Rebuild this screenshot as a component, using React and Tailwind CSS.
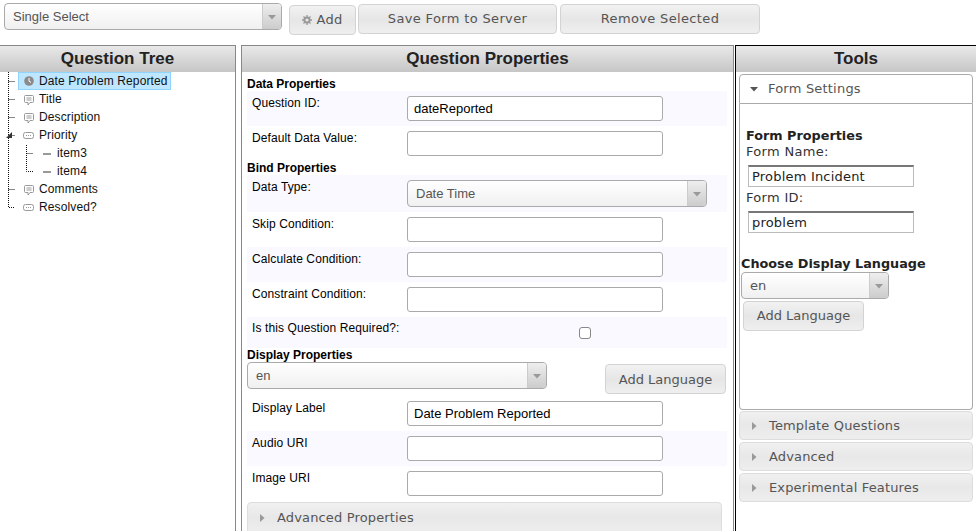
const sans = 'font-["Liberation_Sans",Arial,sans-serif]';
const verdana = 'font-["DejaVu_Sans",Verdana,sans-serif]';

function Caret({ open, light, className = '' }) {
  return (
    <svg width="8" height="8" viewBox="0 0 8 8" className={className}>
      {open ? <path d="M0 2h8L4 6.500z" fill={light ? '#999' : '#555'} /> : <path d="M2 0l4.500 4L2 8z" fill="#999" />}
    </svg>
  );
}

function Gear() {
  return (
    <svg width="10" height="10" viewBox="0 0 10 10">
      <circle cx="5" cy="5" r="2.600" fill="none" stroke="#999" strokeWidth="2" />
      <path d="M5 0v2M5 8v2M0 5h2M8 5h2M1.500 1.500l1.400 1.400M7.100 7.100l1.400 1.400M8.500 1.500L7.100 2.900M2.900 7.100L1.500 8.500" stroke="#999" strokeWidth="1.300" />
    </svg>
  );
}

function TreeIcon({ type }) {
  if (type === 'clock') {
    return (
      <svg width="10" height="10" viewBox="0 0 10 10">
        <circle cx="5" cy="5" r="4.800" fill="#8a8a8a" />
        <path d="M5 2v3.200l2 1.200" stroke="#fff" strokeWidth="1" fill="none" />
      </svg>
    );
  }
  if (type === 'text') {
    return (
      <svg width="10" height="11" viewBox="0 0 10 11" className="mt-[2px]">
        <path d="M1.500.5h7a1 1 0 0 1 1 1v5a1 1 0 0 1-1 1H6L4 10V7.500H1.500a1 1 0 0 1-1-1v-5a1 1 0 0 1 1-1z" fill="none" stroke="#999" />
        <path d="M2.500 3h5M2.500 5h5" stroke="#999" />
      </svg>
    );
  }
  if (type === 'select') {
    return (
      <svg width="11" height="7" viewBox="0 0 11 7">
        <rect x=".5" y=".5" width="10" height="6" rx="2" fill="none" stroke="#999" />
        <path d="M3 3.500h1M5 3.500h1M7 3.500h1" stroke="#999" />
      </svg>
    );
  }
  return <span className="block w-[8px] h-[2px] bg-[#999] mt-[2px]" />;
}

function SelectBox({ value, className = '' }) {
  return (
    <div className={`flex items-stretch border border-[#aaa] rounded-[4px] bg-gradient-to-b from-white to-[#f0f0f0] overflow-hidden ${className}`}>
      <span className="flex-1 flex items-center pl-[8px] text-[#555]">{value}</span>
      <span className="w-[19px] flex items-center justify-center border-l border-[#ccc] bg-gradient-to-b from-[#eee] to-[#ccc]">
        <Caret open light />
      </span>
    </div>
  );
}

function Button({ children, className = '', tracking = 'tracking-[0.35px]' }) {
  return (
    <div className={`flex items-center justify-center border border-[#d3d3d3] rounded-[4px] bg-gradient-to-b from-[#f2f2f2] via-[#e6e6e6] to-[#efefef] text-[#555] text-[13px] ${tracking} ${verdana} ${className}`}>
      {children}
    </div>
  );
}

function PropRow({ label, shaded, value, last, tall }) {
  return (
    <div className={`flex pl-[5px] ${tall ? 'h-[37px]' : 'h-[35px]'} ${shaded ? 'bg-[#f9f9ff]' : ''}`}>
      <span className="w-[155px] pt-[5px] text-[12px] tracking-[0.1px] leading-[14px] text-black">{label}</span>
      <div className="pt-[5px]">
        {value === undefined ? null : (
          <div className="w-[256px] h-[25px] border border-[#aaa] rounded-[3px] bg-white pl-[6px] flex items-center text-[13px] text-black">
            {value}
          </div>
        )}
        {last}
      </div>
    </div>
  );
}

const treeRows = [
  { label: 'Date Problem Reported', icon: 'clock', selected: true },
  { label: 'Title', icon: 'text' },
  { label: 'Description', icon: 'text' },
  { label: 'Priority', icon: 'select' },
  { label: 'item3', icon: 'item', child: true },
  { label: 'item4', icon: 'item', child: true },
  { label: 'Comments', icon: 'text' },
  { label: 'Resolved?', icon: 'select' },
];

function QuestionTree() {
  return (
    <div className="relative">
      <svg width="60" height="144" className="absolute left-0 top-0" fill="none" stroke="#111" strokeDasharray="1 1">
        <path d="M8.500 0V135.500H15M8.500 9.500H15M8.500 27.500H15M8.500 45.500H15M8.500 63.500H15M8.500 117.500H15M26.500 73V99.500H33M26.500 81.500H33" />
      </svg>
      <svg width="10" height="8" className="absolute left-[5px] top-[59px]">
        <path d="M1 7h6V1z" fill="#333" />
      </svg>
      {treeRows.map((row) => (
        <div key={row.label} className={`h-[18px] flex items-center ${row.child ? 'pl-[36px]' : 'pl-[18px]'}`}>
          <div className={`h-[18px] flex items-center pr-[2px] border ${row.selected ? 'bg-[#bfe6ff] border-[#8fd3ff]' : 'border-transparent'}`}>
            <span className="w-[20px] flex justify-center pr-[1px]"><TreeIcon type={row.icon} /></span>
            <span className="text-[12px] tracking-[0.12px] text-[#111]">{row.label}</span>
          </div>
        </div>
      ))}
    </div>
  );
}

function PanelHeader({ children }) {
  return (
    <div className={`h-[26px] flex items-center justify-center bg-gradient-to-b from-[#e9e9e9] to-[#c6c6c6] text-[17px] font-bold text-[#222] ${sans}`}>
      {children}
    </div>
  );
}

function AccordionBar({ children, className = '' }) {
  return (
    <div className={`flex items-center gap-[11px] pl-[10px] border border-[#ddd] rounded-[4px] bg-gradient-to-b from-[#f0f0f0] via-[#e8e8e8] to-[#eeeeee] text-[13px] tracking-[0.15px] text-[#555] ${verdana} ${className}`}>
      <Caret />
      {children}
    </div>
  );
}

function FormField({ value }) {
  return (
    <div className="ml-[2px] w-[166px] h-[22px] border border-[#bbb] border-t-[#777] border-t-2 bg-white pl-[3px] flex items-center text-[13px] tracking-[0.2px] text-[#222]">
      {value}
    </div>
  );
}

export default function App() {
  return (
    <div className={`w-[976px] h-[531px] overflow-hidden bg-white ${sans}`}>
      <div className="h-[45px] flex items-start">
        <SelectBox value="Single Select" className="ml-[4px] mt-[3px] w-[278px] h-[27px] text-[13px]" />
        <Button className="ml-[7px] mt-[5px] w-[67px] h-[30px] gap-[5px] pr-[1px]" tracking="tracking-[0.2px]"><Gear />Add</Button>
        <Button className="ml-[2px] mt-[4px] w-[199px] h-[30px]">Save Form to Server</Button>
        <Button className="ml-[3px] mt-[4px] w-[200px] h-[30px]">Remove Selected</Button>
      </div>
      <div className="h-[486px] flex">
        <section className="w-[236px] border-t border-r border-[#888]">
          <PanelHeader>Question Tree</PanelHeader>
          <QuestionTree />
        </section>
        <section className="ml-[5px] w-[493px] border-t border-l border-r border-[#888]">
          <PanelHeader>Question Properties</PanelHeader>
          <div className="pl-[5px] pr-[6px]">
            <h3 className="h-[19px] pt-[5px] text-[12px] leading-[14px] font-bold text-black">Data Properties</h3>
            <PropRow label="Question ID:" value="dateReported" shaded />
            <PropRow label="Default Data Value:" value="" />
            <h3 className="h-[14px] text-[12px] leading-[14px] font-bold text-black">Bind Properties</h3>
            <PropRow
              label="Data Type:"
              shaded
              tall
              last={<SelectBox value="Date Time" className="w-[300px] h-[27px] text-[13px]" />}
            />
            <PropRow label="Skip Condition:" value="" />
            <PropRow label="Calculate Condition:" value="" shaded />
            <PropRow label="Constraint Condition:" value="" />
            <div className="h-[31px] flex pl-[5px] bg-[#f9f9ff]">
              <span className="w-[327px] pt-[4px] text-[12px] tracking-[0.1px] leading-[14px] text-black">Is this Question Required?:</span>
              <span className="mt-[10px] w-[12px] h-[12px] border border-[#888] rounded-[3px] bg-white" />
            </div>
            <h3 className="h-[14px] text-[12px] leading-[14px] font-bold text-black">Display Properties</h3>
            <div className="h-[34px] flex items-start">
              <SelectBox value="en" className="w-[300px] h-[27px] text-[13px]" />
              <Button className="ml-[58px] mt-[2px] w-[121px] h-[30px] pt-[1px]" tracking="tracking-[0px]">Add Language</Button>
            </div>
            <PropRow label="Display Label" value="Date Problem Reported" />
            <PropRow label="Audio URI" value="" shaded />
            <PropRow label="Image URI" value="" />
            <AccordionBar className="mt-[1px] w-[475px] h-[32px]">Advanced Properties</AccordionBar>
          </div>
        </section>
        <section className="ml-[1px] flex-1 border-t border-l border-black">
          <PanelHeader>Tools</PanelHeader>
          <div className={`ml-[3px] mt-[2px] w-[234px] text-[13px] ${verdana}`}>
            <div className="h-[30px] flex items-center gap-[10px] pl-[10px] border border-[#aaa] rounded-t-[4px] bg-white text-[13px] tracking-[0.2px] text-[#555]">
              <Caret open />
              Form Settings
            </div>
            <div className="h-[306px] border border-t-0 border-[#aaa] rounded-b-[4px] bg-white text-[#333]">
              <div className="pl-[6px] pt-[24px]">
                <div className="text-[12.8px] leading-[16px] font-bold text-[#222]">Form Properties</div>
                <div className="leading-[16px] tracking-[0.3px] mb-[5px]">Form Name:</div>
                <FormField value="Problem Incident" />
                <div className="leading-[16px] mt-[3px] mb-[5px] tracking-[0.3px]">Form ID:</div>
                <FormField value="problem" />
              </div>
              <div className="pl-[1px] pt-[23px]">
                <div className="text-[12.8px] leading-[16px] font-bold text-[#222]">Choose Display Language</div>
                <SelectBox value="en" className="w-[148px] h-[27px] text-[13px]" />
                <Button className="ml-[2px] mt-[2px] w-[121px] h-[30px]" tracking="tracking-[0px]">Add Language</Button>
              </div>
            </div>
            <AccordionBar className="mt-[1px] h-[29px]">Template Questions</AccordionBar>
            <AccordionBar className="mt-[2px] h-[29px]">Advanced</AccordionBar>
            <AccordionBar className="mt-[2px] h-[29px]">Experimental Features</AccordionBar>
          </div>
        </section>
      </div>
    </div>
  );
}
